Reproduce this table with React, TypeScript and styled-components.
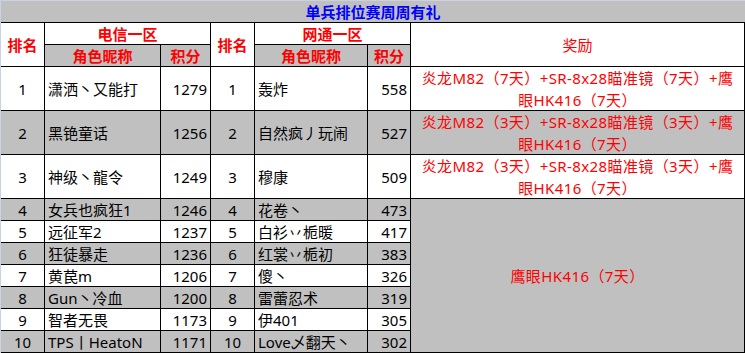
import React, { FC } from "react";
import styled, { createGlobalStyle } from "styled-components";

const GlobalStyle = createGlobalStyle`
  html, body {
    margin: 0;
    padding: 0;
    background: #ffffff;
  }
  body {
    font-family: "Noto Sans", "Noto Sans CJK SC", sans-serif;
  }
`;

const GRAY = "#c0c0c0";
const RED = "#ff0000";

const Sheet = styled.div`
  width: 745px;
  height: 353px;
  box-sizing: border-box;
  border-top: 1px solid #c9d1e2;
  border-left: 1px solid #c9d1e2;
  display: grid;
  grid-template-columns: 44px 116px 50px 44px 113px 43px 334px;
  grid-template-rows: 22px 22px 22px 44px 44px 44px repeat(7, 22px);
`;

type CellProps = {
  $bg?: string;
  $align?: "left" | "center" | "right";
  $color?: string;
  $bold?: boolean;
  $col?: string;
  $row?: string;
  $noRight?: boolean;
};

const justify = { left: "flex-start", center: "center", right: "flex-end" };

const Cell = styled.div<CellProps>`
  box-sizing: border-box;
  display: flex;
  align-items: center;
  justify-content: ${(p) => justify[p.$align || "center"]};
  text-align: ${(p) => p.$align || "center"};
  padding: 0 3px;
  background: ${(p) => p.$bg || "#ffffff"};
  color: ${(p) => p.$color || "#000000"};
  font-weight: ${(p) => (p.$bold ? 700 : 400)};
  font-size: 15px;
  line-height: 22px;
  white-space: nowrap;
  border-right: ${(p) => (p.$noRight ? "none" : "1px solid #000")};
  border-bottom: 1px solid #000;
  grid-column: ${(p) => p.$col || "auto"};
  grid-row: ${(p) => p.$row || "auto"};
  overflow: hidden;
`;

const Title = styled(Cell)`
  color: #0000ff;
  font-weight: 700;
`;

const Reward = styled(Cell)`
  color: ${RED};
  flex-direction: column;
  justify-content: center;
  letter-spacing: 0.4px;
`;

const Line = styled.span`
  display: block;
`;

type Row = { rank: number; a: string; as: number; b: string; bs: number };

const rows: Row[] = [
  { rank: 1, a: "潇洒丶又能打", as: 1279, b: "轰炸", bs: 558 },
  { rank: 2, a: "黑铯童话", as: 1256, b: "自然疯丿玩闹", bs: 527 },
  { rank: 3, a: "神级丶龍令", as: 1249, b: "穆康", bs: 509 },
  { rank: 4, a: "女兵也疯狂1", as: 1246, b: "花卷丶", bs: 473 },
  { rank: 5, a: "远征军2", as: 1237, b: "白衫丷栀暖", bs: 417 },
  { rank: 6, a: "狂徒暴走", as: 1236, b: "红裳丷栀初", bs: 383 },
  { rank: 7, a: "黄苠m", as: 1206, b: "傻丶", bs: 326 },
  { rank: 8, a: "Gun丶冷血", as: 1200, b: "雷蕾忍术", bs: 319 },
  { rank: 9, a: "智者无畏", as: 1173, b: "伊401", bs: 305 },
  { rank: 10, a: "TPS丨HeatoN", as: 1171, b: "Love乄翻天丶", bs: 302 },
];

const topRewards = [
  ["炎龙M82（7天）+SR-8x28瞄准镜（7天）+鹰", "眼HK416（7天）"],
  ["炎龙M82（3天）+SR-8x28瞄准镜（3天）+鹰", "眼HK416（7天）"],
  ["炎龙M82（3天）+SR-8x28瞄准镜（3天）+鹰", "眼HK416（7天）"],
];

const App: FC = () => {
  return (
    <>
      <GlobalStyle />
      <Sheet>
        <Title $bg={GRAY} $col="1 / 8" $noRight>
          单兵排位赛周周有礼
        </Title>

        <Cell $row="2 / 4" $color={RED} $bold>排名</Cell>
        <Cell $col="2 / 4" $color={RED} $bold>电信一区</Cell>
        <Cell $row="2 / 4" $col="4" $color={RED} $bold>排名</Cell>
        <Cell $col="5 / 7" $color={RED} $bold>网通一区</Cell>
        <Cell $row="2 / 4" $col="7" $color={RED}>奖励</Cell>
        <Cell $col="2" $row="3" $bg={GRAY} $color={RED} $bold>角色昵称</Cell>
        <Cell $col="3" $row="3" $bg={GRAY} $color={RED} $bold>积分</Cell>
        <Cell $col="5" $row="3" $bg={GRAY} $color={RED} $bold>角色昵称</Cell>
        <Cell $col="6" $row="3" $bg={GRAY} $color={RED} $bold>积分</Cell>

        {rows.map((r, i) => {
          const bg = i % 2 === 1 ? GRAY : "#ffffff";
          const row = String(i + 4);
          return (
            <React.Fragment key={r.rank}>
              <Cell $col="1" $row={row} $bg={bg}>{r.rank}</Cell>
              <Cell $col="2" $row={row} $bg={bg} $align="left">{r.a}</Cell>
              <Cell $col="3" $row={row} $bg={bg} $align="right">{r.as}</Cell>
              <Cell $col="4" $row={row} $bg={bg}>{r.rank}</Cell>
              <Cell $col="5" $row={row} $bg={bg} $align="left">{r.b}</Cell>
              <Cell $col="6" $row={row} $bg={bg} $align="right">{r.bs}</Cell>
              {i < 3 && (
                <Reward $col="7" $row={row} $bg={bg}>
                  {topRewards[i].map((l) => (
                    <Line key={l}>{l}</Line>
                  ))}
                </Reward>
              )}
            </React.Fragment>
          );
        })}
        <Reward $col="7" $row="7 / 14" $bg={GRAY}>鹰眼HK416（7天）</Reward>
      </Sheet>
    </>
  );
};

export default App;
